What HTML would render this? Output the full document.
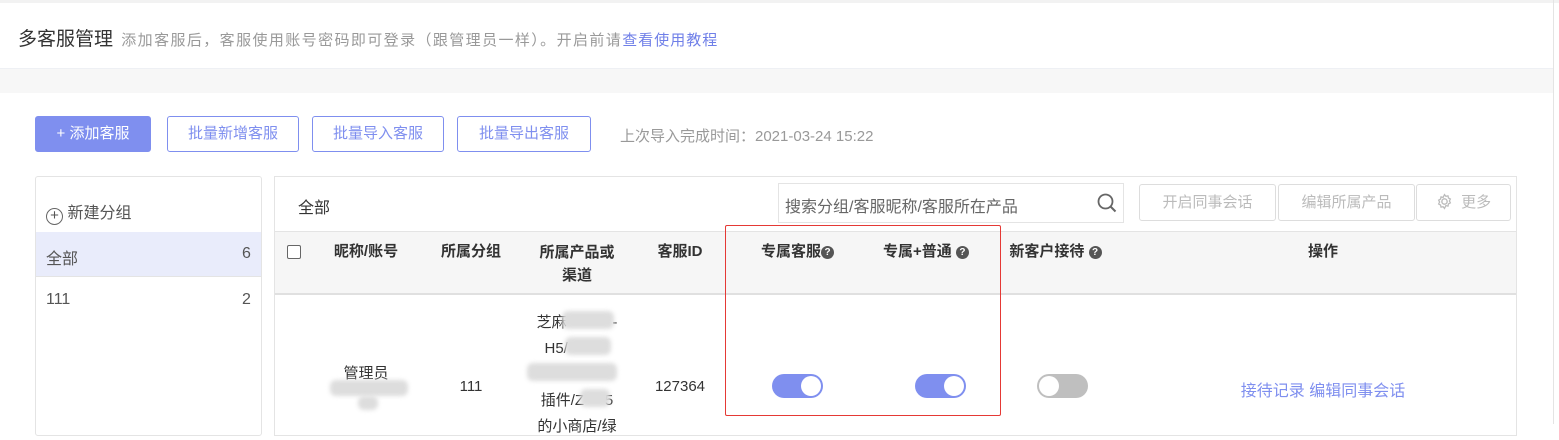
<!DOCTYPE html>
<html><head><meta charset="utf-8"><style>
*{margin:0;padding:0;box-sizing:border-box}
body{width:1559px;height:424px;overflow:hidden;background:#fff;font-family:"Liberation Sans","Noto Sans CJK SC",sans-serif;position:relative;color:#333}
.a{position:absolute;white-space:nowrap}
.btn{position:absolute;top:116px;height:36px;border:1px solid #7f8fef;border-radius:3px;color:#7f8fef;font-size:15px;line-height:34px;text-align:center;background:#fff}
.gb{position:absolute;top:184px;height:37px;border:1px solid #ddd;border-radius:3px;color:#bbb;font-size:15px;line-height:35px;text-align:center}
.th{position:absolute;top:241px;font-size:15px;font-weight:bold;color:#333;text-align:center;line-height:22px}
.q{display:inline-block;width:13px;height:13px;border-radius:50%;background:#555;color:#fff;font-size:10px;line-height:13px;text-align:center;vertical-align:1px}
.tg{position:absolute;top:374px;width:51px;height:24px;border-radius:12px}
.tg i{position:absolute;top:2px;width:20px;height:20px;border-radius:50%;background:#fff}
.td{position:absolute;font-size:15px;color:#333;text-align:center}
.blur{position:absolute;background:#ddd;border-radius:6px;filter:blur(2px)}
</style></head><body>
<div class="a" style="left:0;top:0;width:1559px;height:3px;background:#f2f2f2"></div>
<div class="a" style="left:0;top:68px;width:1553px;height:25px;background:#f7f7f7;border-top:1px solid #eef0f4"></div>
<div class="a" style="left:1553px;top:0;width:1px;height:424px;background:#e4e4e4"></div>
<div class="a" style="left:18px;top:24px;font-size:19px;color:#333">多客服管理 <span style="font-size:15px;color:#999;letter-spacing:1.4px;margin-left:3px">添加客服后，客服使用账号密码即可登录（跟管理员一样）。开启前请</span><span style="font-size:15px;color:#6f7fe8;letter-spacing:1px">查看使用教程</span></div>

<div class="btn" style="left:35px;width:116px;background:#7f8fef;color:#fff;border-color:#7f8fef">+ 添加客服</div>
<div class="btn" style="left:167px;width:132px">批量新增客服</div>
<div class="btn" style="left:312px;width:132px">批量导入客服</div>
<div class="btn" style="left:457px;width:134px">批量导出客服</div>
<div class="a" style="left:620px;top:125px;font-size:15px;color:#999">上次导入完成时间：2021-03-24 15:22</div>

<div class="a" style="left:35px;top:176px;width:227px;height:260px;border:1px solid #e4e4e4;border-radius:3px"></div>
<div class="a" style="left:46px;top:199px;font-size:16px;color:#555"><span style="display:inline-block;width:17px;height:17px;border:1.5px solid #666;border-radius:50%;text-align:center;line-height:13px;font-size:15px;vertical-align:-2px">+</span> 新建分组</div>
<div class="a" style="left:36px;top:232px;width:225px;height:45px;background:#e9ecfb;border-bottom:1px solid #e4e4e4"></div>
<div class="a" style="left:46px;top:245px;font-size:16px;color:#555">全部</div>
<div class="a" style="left:242px;top:245px;font-size:16px;color:#555">6</div>
<div class="a" style="left:46px;top:291px;font-size:16px;color:#555">111</div>
<div class="a" style="left:242px;top:291px;font-size:16px;color:#555">2</div>

<div class="a" style="left:274px;top:176px;width:1243px;height:260px;border:1px solid #e4e4e4"></div>
<div class="a" style="left:298px;top:194px;font-size:16px;color:#333">全部</div>
<div class="a" style="left:778px;top:183px;width:346px;height:40px;border:1px solid #e4e4e4"></div>
<div class="a" style="left:785px;top:193px;font-size:16px;color:#666">搜索分组/客服昵称/客服所在产品</div>
<svg class="a" style="left:1096px;top:192px" width="22" height="22" viewBox="0 0 22 22"><circle cx="9.5" cy="9.5" r="7" fill="none" stroke="#666" stroke-width="1.8"/><path d="M14.5 14.5l5 5" stroke="#666" stroke-width="2"/></svg>
<div class="gb" style="left:1139px;width:137px">开启同事会话</div>
<div class="gb" style="left:1278px;width:137px">编辑所属产品</div>
<div class="gb" style="left:1416px;width:95px"><svg width="17" height="17" viewBox="0 0 16 16" style="vertical-align:-3px"><circle cx="8" cy="8" r="2.5" fill="none" stroke="#bbb" stroke-width="1.3"/><path d="M8 1.5l1.3 1.6 2-.4.4 2 1.8 1-.9 1.8.9 1.8-1.8 1-.4 2-2-.4L8 14.5l-1.3-1.6-2 .4-.4-2-1.8-1 .9-1.8-.9-1.8 1.8-1 .4-2 2 .4z" fill="none" stroke="#bbb" stroke-width="1.2"/></svg>&nbsp; 更多</div>

<div class="a" style="left:275px;top:231px;width:1241px;height:64px;background:#f6f6f6;border-top:1px solid #e4e4e4;border-bottom:2px solid #e0e0e0"></div>
<div class="a" style="left:287px;top:245px;width:14px;height:14px;border:1px solid #666;border-radius:2px;background:#fff"></div>
<div class="th" style="left:316px;width:100px">昵称/账号</div>
<div class="th" style="left:426px;width:90px">所属分组</div>
<div class="th" style="left:527px;width:100px;line-height:23px">所属产品或<br>渠道</div>
<div class="th" style="left:640px;width:80px">客服ID</div>
<div class="th" style="left:745px;width:105px">专属客服<span class="q">?</span></div>
<div class="th" style="left:866px;width:120px">专属+普通 <span class="q">?</span></div>
<div class="th" style="left:998px;width:115px">新客户接待 <span class="q">?</span></div>
<div class="th" style="left:1283px;width:80px">操作</div>

<div class="td" style="left:316px;top:362px;width:100px">管理员</div>
<div class="blur" style="left:330px;top:380px;width:78px;height:16px"></div>
<div class="blur" style="left:358px;top:396px;width:20px;height:14px"></div>
<div class="td" style="left:426px;top:378px;width:90px">111</div>
<div class="td" style="left:527px;top:310px;width:100px;line-height:26px">芝麻&nbsp;&nbsp;&nbsp;&nbsp;&nbsp;&nbsp;&nbsp;&nbsp;&nbsp;&nbsp;&nbsp;-<br>H5/&nbsp;&nbsp;&nbsp;&nbsp;&nbsp;&nbsp;&nbsp;&nbsp;&nbsp;&nbsp;<br>&nbsp;&nbsp;&nbsp;&nbsp;&nbsp;&nbsp;&nbsp;&nbsp;&nbsp;&nbsp;&nbsp;&nbsp;&nbsp;-<br>插件/Z&nbsp;&nbsp;&nbsp;&nbsp;&nbsp;5<br>的小商店/绿</div>
<div class="blur" style="left:562px;top:311px;width:52px;height:18px"></div>
<div class="blur" style="left:565px;top:337px;width:46px;height:18px"></div>
<div class="blur" style="left:527px;top:363px;width:90px;height:18px"></div>
<div class="blur" style="left:580px;top:389px;width:30px;height:18px"></div>
<div class="td" style="left:640px;top:378px;width:80px">127364</div>

<div class="tg" style="left:772px;background:#7f8fef"><i style="left:29px"></i></div>
<div class="tg" style="left:915px;background:#7f8fef"><i style="left:29px"></i></div>
<div class="tg" style="left:1037px;background:#bfbfbf"><i style="left:2px"></i></div>
<div class="td" style="left:1223px;top:377px;width:200px;color:#7f8fef;font-size:16px">接待记录 编辑同事会话</div>

<div class="a" style="left:725px;top:225px;width:276px;height:191px;border:1px solid #e53935;border-radius:2px"></div>
</body></html>
